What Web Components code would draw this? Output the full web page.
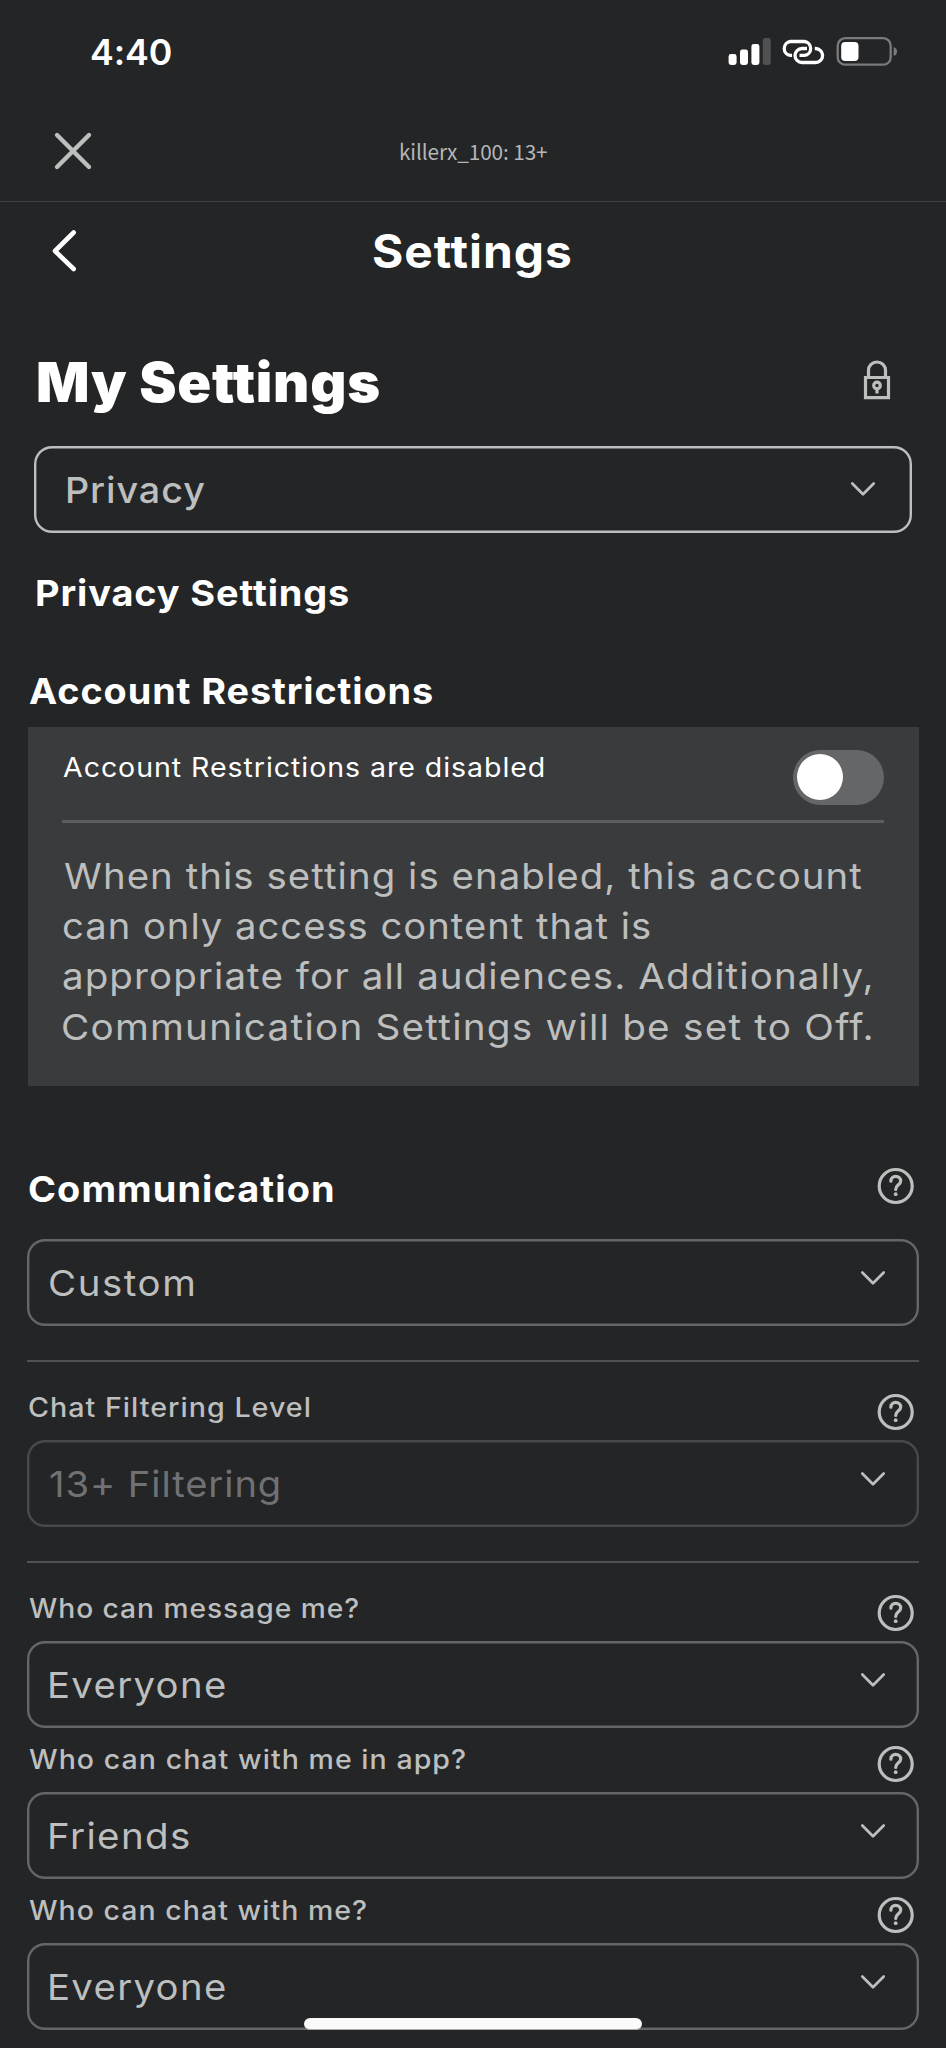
<!DOCTYPE html>
<html lang="en">
<head>
<meta charset="utf-8">
<title>Settings</title>
<style>
html,body{margin:0;background:#232527}
body{font-family:Inter,"Noto Sans",sans-serif;color:#fff;width:946px;height:2048px;overflow:hidden;position:relative}
</style>
</head>
<body>
<settings-page></settings-page>
<script>
const define=(name,html,after)=>{
  const t=document.createElement('template');t.innerHTML=html;
  customElements.define(name,class extends HTMLElement{
    constructor(){super();this.attachShadow({mode:'open'}).append(t.content.cloneNode(true));}
    connectedCallback(){if(after)after(this,this.shadowRoot);}
  });
};

// One line of text whose ink spans exactly the "w" attribute:
// part of the extra width goes into tracking, the rest widens the letterforms.
define('track-text','<style>:host{display:block;white-space:pre;flex:none;font-kerning:normal}span{display:block;transform-origin:0 50%}</style><span><slot></slot></span>',(el,root)=>{
  const s=root.querySelector('span'),size=el.getAttribute('size'),weight=el.getAttribute('weight')||400,w=+el.getAttribute('w');
  const family=el.getAttribute('family')||'Inter';
  const text=el.textContent,ctx=document.createElement('canvas').getContext('2d');
  ctx.font=`${weight} ${size}px "${family}"`;
  const m=ctx.measureText(text),ink=m.actualBoundingBoxRight+m.actualBoundingBoxLeft,gaps=text.length-1;
  const ls=(w-ink)/gaps*.45,k=w/(ink+gaps*ls);
  s.style.cssText=`font:${weight} ${size}px/${el.getAttribute('lh')||40}px "${family}",sans-serif;letter-spacing:${ls.toFixed(3)}px;margin-left:${m.actualBoundingBoxLeft*k}px;width:${w}px;transform:scaleX(${k.toFixed(4)})`;
});

define('status-bar',`<style>:host{display:flex;height:100px;padding:2px 50px 0 91px;align-items:center;justify-content:space-between}svg{display:block}</style>
<track-text size="36" weight="600" w="79.5">4:40</track-text>
<svg width="168" height="30" viewBox="0 0 168 30" fill="none" overflow="visible">
<g fill="#fff"><rect x=".6" y="17" width="8" height="11" rx="2.4"/><rect x="12" y="12.5" width="8" height="15.5" rx="2.4"/><rect x="23.4" y="7" width="8" height="21" rx="2.4"/><rect x="34.8" y="1" width="8" height="27" rx="2.4" fill="#505153"/></g>
<g stroke="#fff" stroke-width="3.3"><path d="M64 18.4H62.4A7 7 0 0 1 62.4 4.5H76.5A7 7 0 0 1 76.5 18.4H71.5"/><path d="M86.8 11.5H87.6A7 7 0 0 1 87.6 25.5H74A7 7 0 0 1 74 11.5H79"/></g>
<rect x="109.7" y="1.2" width="53" height="26.5" rx="7.5" stroke="#7a7b7c" stroke-width="2.3"/><rect x="113.2" y="5" width="17.3" height="19" rx="4" fill="#fff"/><path d="M165.7 10Q169 11 169 14.5Q169 18 165.7 19Z" fill="#7a7b7c"/></svg>`);

define('app-bar',`<style>:host{display:grid;grid-template-columns:1fr auto 1fr;align-items:center;height:98px;padding:0 0 1px;border-bottom:1px solid #3e4042}svg{margin-left:53px;display:block}track-text{color:#b5b6b7}</style>
<svg width="40" height="40" viewBox="0 0 40 40" stroke="#bdbebe" stroke-width="4.4" stroke-linecap="round"><path d="M4 4 36 36M36 4 4 36"/></svg>
<track-text size="21" w="147" family="Noto Sans CJK SC">killerx_100: 13+</track-text><span></span>`);

define('title-bar',`<style>:host{display:grid;grid-template-columns:1fr auto 1fr;align-items:center;height:98px}svg{margin-left:50px;display:block}track-text{margin:-1px 2px 0 0}</style>
<svg width="28" height="42" viewBox="0 0 28 42" fill="none" stroke="#fff" stroke-width="4.6" stroke-linecap="round" stroke-linejoin="round"><path d="M23.7 2.5 5 21 23.7 39"/></svg>
<track-text size="46" weight="700" w="198" lh="60">Settings</track-text><span></span>`);

define('help-icon',`<style>:host{display:block;width:38px;height:38px;flex:none}svg{display:block}</style>
<svg width="38" height="38" viewBox="0 0 38 38" fill="none" stroke="#bdbebe" stroke-linecap="round"><circle cx="18.7" cy="19" r="16.5" stroke-width="3.2"/><path d="M13.9 14.2C13.9 11.2 16 9.4 18.7 9.4C21.6 9.4 23.7 11.3 23.7 14C23.7 17.8 18.7 17.9 18.7 22.4" stroke-width="3.2"/><circle cx="18.7" cy="27.2" r="1.9" fill="#bdbebe" stroke="none"/></svg>`);

define('drop-down',`<style>:host{--edge:#656668;display:flex;box-sizing:border-box;height:87px;box-shadow:inset 0 0 0 2.4px var(--edge);border-radius:18px;color:#bdbebe;align-items:center;justify-content:space-between;padding:0 33px 0 23px;margin:0 27px}
:host([main]){--edge:#bdbebe;margin:0 34px;padding:0 36px 0 33px}:host([disabled]){--edge:#47494b;color:#707173}
svg{display:block;margin-bottom:10px}:host([main]) svg{margin:0 0 1px}</style><slot></slot>
<svg width="26" height="16" viewBox="0 0 26 16" fill="none" stroke="#bdbebe" stroke-width="2.7" stroke-linecap="round" stroke-linejoin="round"><path d="M2.3 2.5 13 13.3 23.7 2.5"/></svg>`);

define('field-label',`<style>:host{display:flex;height:64px;justify-content:space-between;margin:0 31px 0 29px;color:#bdbebe;align-items:flex-start}::slotted(*){margin-top:11px}help-icon{margin-top:17px}</style><slot></slot><help-icon></help-icon>`);

define('section-rule','<style>:host{display:block;height:2px;background:#4f5153;margin:34px 27px 14px}</style>');

define('toggle-switch','<style>:host{display:flex;box-sizing:border-box;width:91px;height:55px;border-radius:28px;background:#656668;padding:4.5px 4px}i{width:46px;height:46px;border-radius:50%;background:#fff}</style><i></i>');

define('restriction-card',`<style>:host{display:block;box-sizing:border-box;margin:16px 27.5px 0;height:358.5px;background:#393b3d;padding:22px 34.5px 0}
.row{display:flex;height:71px;justify-content:space-between;border-bottom:3px solid #5b5d5f;align-items:flex-start}toggle-switch{margin-top:.5px}.row track-text{margin-left:1px}.copy{margin:27.5px 0 0 1.5px;color:#bdbebe}</style>
<div class="row"><track-text size="26.5" w="481" lh="36">Account Restrictions are disabled</track-text><toggle-switch></toggle-switch></div>
<div class="copy">
<track-text size="36" w="798" lh="50.4">When this setting is enabled, this account</track-text>
<track-text size="36" w="587" lh="50.4">can only access content that is</track-text>
<track-text size="36" w="808" lh="50.4">appropriate for all audiences. Additionally,</track-text>
<track-text size="36" w="808" lh="50.4">Communication Settings will be set to Off.</track-text></div>`);

define('home-indicator','<style>:host{position:absolute;left:304px;top:2018px;width:338px;height:12px;box-sizing:border-box;border-radius:6px;background:#fafafb;border-bottom:1px solid #aaa}</style>');

define('settings-page',`<style>:host{display:block}
.top{display:flex;justify-content:space-between;align-items:center;height:60px;margin:52px 55px 34px 38px}
.top svg{display:block;margin-bottom:6px}
.privacy{margin:40px 0 0 37px}.account{margin:58px 0 0 29px}
.comm{display:flex;justify-content:space-between;align-items:center;height:40px;margin:83.5px 31px 30px 29px}.comm help-icon{margin-bottom:6px}</style>
<status-bar></status-bar><app-bar></app-bar><title-bar></title-bar>
<div class="top"><track-text size="54.5" weight="900" w="341" lh="60">My Settings</track-text>
<svg width="28" height="41" viewBox="0 0 28 41" fill="none" stroke="#bdbebe" stroke-width="3.2"><path d="M2.5 18.5H25.5V38.7H2.5ZM5.5 18V11.5A8.5 8.5 0 0 1 22.5 11.5V18"/><circle cx="14" cy="26.5" r="3.3"/><path d="M14 29V34.5"/></svg></div>
<drop-down main><track-text size="36" weight="500" w="137">Privacy</track-text></drop-down>
<track-text class="privacy" size="36" weight="700" w="311">Privacy Settings</track-text>
<track-text class="account" size="36" weight="700" w="403">Account Restrictions</track-text>
<restriction-card></restriction-card>
<div class="comm"><track-text size="36" weight="700" w="304">Communication</track-text><help-icon></help-icon></div>
<drop-down><track-text size="36" w="143">Custom</track-text></drop-down>
<section-rule></section-rule>
<field-label><track-text size="26.5" weight="500" w="280">Chat Filtering Level</track-text></field-label>
<drop-down disabled><track-text size="36" w="229">13+ Filtering</track-text></drop-down>
<section-rule></section-rule>
<field-label><track-text size="26.5" weight="500" w="329">Who can message me?</track-text></field-label>
<drop-down><track-text size="36" w="175">Everyone</track-text></drop-down>
<field-label><track-text size="26.5" weight="500" w="436">Who can chat with me in app?</track-text></field-label>
<drop-down><track-text size="36" w="139">Friends</track-text></drop-down>
<field-label><track-text size="26.5" weight="500" w="337">Who can chat with me?</track-text></field-label>
<drop-down><track-text size="36" w="175">Everyone</track-text></drop-down>
<home-indicator></home-indicator>`);
</script>
</body>
</html>
